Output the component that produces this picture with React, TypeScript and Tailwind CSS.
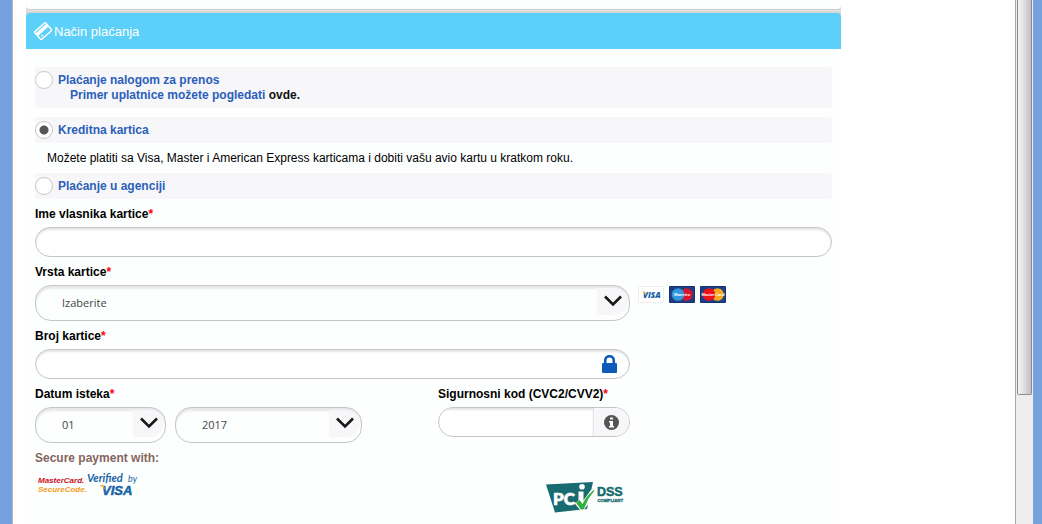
import type { ReactNode } from "react";

const inputStyle =
  "block w-full rounded-[16px] border border-[#c6c6c6] bg-white px-4 text-[12px] text-black shadow-[inset_0_2px_2px_#e4e4e6] outline-none";

function FieldLabel({ htmlFor, children }: { htmlFor: string; children: ReactNode }) {
  return (
    <label htmlFor={htmlFor} className="flex h-7 items-center whitespace-nowrap pt-0.5 font-bold text-black">
      {children}
      <span className="text-[#ff0000]">*</span>
    </label>
  );
}

function PaymentRow({
  id,
  label,
  checked,
  className,
  children,
}: {
  id: string;
  label: string;
  checked?: boolean;
  className: string;
  children?: ReactNode;
}) {
  return (
    <div className={`flex gap-[5px] rounded-[3px] bg-[#f7f6f9] ${className}`}>
      <input
        type="radio"
        name="payment"
        id={id}
        defaultChecked={checked}
        className="mt-1 size-[18px] shrink-0 appearance-none rounded-full border border-[#c8c8c8] bg-white checked:bg-[radial-gradient(circle,#555_0,#555_4px,#fff_5px)]"
      />
      <div className="pt-1.5 font-bold leading-[15px] text-[#2a5fba]">
        <label htmlFor={id}>{label}</label>
        {children}
      </div>
    </div>
  );
}

function SelectBox({ id, label, options }: { id: string; label?: string; options: string[] }) {
  return (
    <div className="relative w-full">
      <select
        id={id}
        aria-label={label}
        className="block h-9 w-full appearance-none rounded-[16px] border border-[#c6c6c6] bg-[#fdfffe] pb-0.5 pl-[26px] pr-9 font-['Open_Sans',sans-serif] text-[11px] text-[#444] shadow-[inset_0_3px_2px_#e8e8ea] outline-none"
      >
        {options.map((o) => (
          <option key={o}>{o}</option>
        ))}
      </select>
      <span className="pointer-events-none absolute bottom-1.5 right-0.5 top-[3px] flex w-[31px] items-center justify-center rounded-r-[14px] bg-[#f7f6f9]">
        <svg width="18" height="12" viewBox="0 0 18 12" className="mb-0.5" fill="none" stroke="#181818" strokeWidth="2.6">
          <path d="M1 1.5 9 9.5 17 1.5" />
        </svg>
      </span>
    </div>
  );
}

function CardIcon() {
  return (
    <svg width="18" height="18" viewBox="0 0 18 18" fill="none">
      <g transform="rotate(-42 9 9)">
        <rect x="1.7" y="4" width="14.6" height="10.4" rx="1.2" stroke="#fff" strokeWidth="1.4" />
        <path d="M2 5.800h14v3.600H2z" fill="#fff" />
        <path d="M4 12h2.500" stroke="#fff" strokeWidth="1.200" />
      </g>
    </svg>
  );
}

function VisaCard() {
  return (
    <svg width="26" height="17" viewBox="0 0 26 17" role="img" aria-label="Visa">
      <rect x=".5" y=".5" width="25" height="16" rx="1" fill="#fff" stroke="#ececec" />
      <text x="5" y="11.500" fontSize="8" fontWeight="800" fontStyle="italic" fontFamily="Open Sans" fill="#195aa5">VISA</text>
      <path d="M4.300 5.500h2.600l.6 3Z" fill="#efb62d" />
    </svg>
  );
}

function CirclesCard({ name, left, right }: { name: string; left: string; right: string }) {
  return (
    <svg width="26" height="17" viewBox="0 0 26 17" role="img" aria-label={name}>
      <rect width="26" height="17" rx="1" fill="#16316f" />
      <rect x="1" y="1" width="24" height="15" fill="#1c3f86" />
      <circle cx="17.500" cy="8.500" r="6.300" fill={right} />
      <circle cx="9" cy="8.500" r="6.300" fill={left} />
      <text x="13" y="10" textAnchor="middle" fontSize="4.200" fontWeight="bold" fontFamily="Liberation Sans" fill="#fff">
        {name}
      </text>
    </svg>
  );
}

function SecurityLogos() {
  return (
    <svg width="110" height="28" viewBox="0 0 110 28" className="block" fontFamily="Liberation Sans" fontStyle="italic" fontWeight="bold">
      <text x="3" y="10.500" fontSize="8" fill="#c9101c">MasterCard.</text>
      <text x="3" y="19.500" fontSize="8" fill="#f59c1c">SecureCode.</text>
      <text x="52" y="10" fontSize="11" fontFamily="Lato" fill="#1763a6">Verified</text>
      <text x="93" y="10" fontSize="9" fontFamily="Lato" fontWeight="400" fill="#1763a6">by</text>
      <text x="67" y="23" fontSize="13" fontFamily="Liberation Sans" fill="#1763a6" stroke="#1763a6" strokeWidth=".5">VISA</text>
      <path d="M64 13.200h4.600l1.700 4.600Q68 14.400 64 13.200Z" fill="#f5a51c" />
    </svg>
  );
}

function PciLogo() {
  return (
    <svg width="80" height="34" viewBox="0 0 80 34" role="img" aria-label="PCI DSS compliant">
      <path d="M0 4.500 47 2 41 29 9 32.500Z" fill="#186b70" />
      <text x="7" y="24.500" fontSize="17" fontWeight="900" fontFamily="Lato" fill="#fff" stroke="#fff" strokeWidth=".7">PC</text>
      <path d="M32.500 11.500h5v13h-5z" fill="#fff" />
      <circle cx="36" cy="6.800" r="2.800" fill="#fff" />
      <path d="M31 21.500 36 27.500 47.500 11.500" fill="none" stroke="#fff" strokeWidth="6" />
      <path d="m30.500 22.500 3-2 3 4.500Q41 15 48 10.500Q41 18 37.500 29h-2.500Z" fill="#30ad43" stroke="#30ad43" />
      <text x="51" y="16" fontSize="12.500" fontWeight="bold" fontFamily="Liberation Sans" fill="#186b70" stroke="#186b70" strokeWidth=".5">DSS</text>
      <text x="51.500" y="21.500" fontSize="4.300" fontWeight="bold" fontFamily="Liberation Sans" fill="#186b70" stroke="#186b70" strokeWidth=".3">COMPLIANT</text>
    </svg>
  );
}

export default function App() {
  return (
    <div className="flex min-h-screen bg-[#75a2df] pl-3 font-['Liberation_Sans',Arial,sans-serif] text-[12px] leading-[15px]">
      <main className="flex min-w-0 flex-1 flex-col border-l border-r border-l-[#b9b9bd] border-r-[#a8a8a8] bg-white pl-[13px] pr-[174px]">
        <div className="bg-[#dcdcdc]">
          <div className="h-[10px] rounded-b-[4px] border-b border-[#cfcfcf] bg-[#fdfffe]" />
          <div className="h-[3px] bg-linear-to-b from-[#e4e4e4] to-[#d2d2d2]" />
          <h1 className="flex h-9 items-center gap-0.5 rounded-t-[4px] bg-[#5cd0f8] pl-2 text-[13px] text-white">
            <CardIcon />
            Način plaćanja
          </h1>
        </div>

        <form className="flex-1 bg-[#fdfffe] px-[9px] pt-[18px]">
          <PaymentRow id="transfer" label="Plaćanje nalogom za prenos" className="h-[41px]">
            <p className="pl-3">
              Primer uplatnice možete pogledati <a href="#" className="text-[#111]">ovde.</a>
            </p>
          </PaymentRow>
          <PaymentRow id="card" label="Kreditna kartica" checked className="mt-[9px] h-[26px]" />
          <p className="flex h-[30px] items-center pl-3 text-black">
            Možete platiti sa Visa, Master i American Express karticama i dobiti vašu avio kartu u kratkom roku.
          </p>
          <PaymentRow id="agency" label="Plaćanje u agenciji" className="h-[26px]" />

          <FieldLabel htmlFor="owner">Ime vlasnika kartice</FieldLabel>
          <input id="owner" type="text" className={`h-[30px] ${inputStyle}`} />

          <FieldLabel htmlFor="type">Vrsta kartice</FieldLabel>
          <div className="grid grid-cols-[minmax(0,1fr)_202px]">
            <SelectBox id="type" options={["Izaberite", "Visa", "Maestro", "MasterCard"]} />
            <div className="flex gap-[5px] pl-2 pt-px">
              <VisaCard />
              <CirclesCard name="Maestro" left="#3298dc" right="#d6152f" />
              <CirclesCard name="MasterCard" left="#f0101a" right="#f9a91b" />
            </div>
          </div>

          <div className="pr-[202px]">
            <FieldLabel htmlFor="number">Broj kartice</FieldLabel>
            <div className="relative">
              <input id="number" type="text" className={`h-[30px] ${inputStyle}`} />
              <svg width="15" height="18" viewBox="0 0 15 18" className="absolute right-[13px] top-1.5">
                <path d="M3.200 9V5.500a4.300 4.300 0 0 1 8.600 0v4" fill="none" stroke="#0b5bb8" strokeWidth="2.600" />
                <rect y="8" width="15" height="10" rx="1" fill="#0b5bb8" />
              </svg>
            </div>

            <div className="flex justify-between">
              <div>
                <FieldLabel htmlFor="month">Datum isteka</FieldLabel>
                <div className="flex gap-[9px]">
                  <div className="w-[131px]">
                    <SelectBox id="month" options={["01", "02", "03", "04", "05", "06", "07", "08", "09", "10", "11", "12"]} />
                  </div>
                  <div className="w-[187px]">
                    <SelectBox id="year" label="Godina isteka" options={["2017", "2018", "2019", "2020"]} />
                  </div>
                </div>
              </div>
              <div className="w-[192px]">
                <FieldLabel htmlFor="cvc">Sigurnosni kod (CVC2/CVV2)</FieldLabel>
                <div className="flex h-[30px] overflow-hidden rounded-[16px] border border-[#c6c6c6] bg-white">
                  <input id="cvc" type="text" className="min-w-0 flex-1 px-4 shadow-[inset_0_2px_2px_#e4e4e6] outline-none" />
                  <button type="button" aria-label="Info" className="flex w-9 items-center justify-center border-l border-[#e6e6ea] bg-[#f7f6f9]">
                    <svg width="15" height="15" viewBox="0 0 15 15">
                      <circle cx="7.500" cy="7.500" r="7.500" fill="#555" />
                      <path d="M6 2.500h3v2H6zM5 6h4v5h1v1.500H5V11h1V7.500H5z" fill="#fff" />
                    </svg>
                  </button>
                </div>
              </div>
            </div>

            <p className="pt-2 font-bold text-[#85655f]">Secure payment with:</p>
            <div className="flex items-start justify-between pr-1 pt-1.5">
              <SecurityLogos />
              <div className="pt-2">
                <PciLogo />
              </div>
            </div>
          </div>
        </form>
      </main>

      <div className="flex w-[17px] shrink-0 flex-col bg-[#eeeeef] px-px">
        <div className="h-[395px] rounded-b-[2px] border-x border-b border-[#8c8c90] bg-linear-to-r from-[#f4f4f4] via-[#dedee0] to-[#bdbdc3]" />
      </div>
      <div className="w-[9px] shrink-0" />
    </div>
  );
}
